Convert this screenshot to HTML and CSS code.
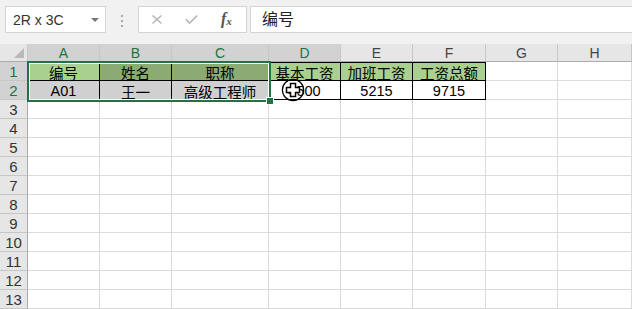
FILE: index.html
```html
<!DOCTYPE html>
<html lang="zh-CN">

<head>
  <meta charset="UTF-8">
  <meta name="viewport" content="width=device-width, initial-scale=1.0">
  <title>工资表</title>
  <link rel="stylesheet" href="styles.css">
</head>

<body>
  <div class="formula-bar">
    <div class="name-box">
      <span>2R x 3C</span>
      <span class="caret"></span>
    </div>
    <div class="grip"><i></i><i></i><i></i></div>
    <div class="fx-buttons">
      <svg class="icon" width="12" height="9" viewBox="0 0 12 9"><path d="M1.5 0.5 L10.5 8.5 M10.5 0.5 L1.5 8.5" stroke="#b4b4b4" stroke-width="1.4" fill="none"/></svg>
      <svg class="icon" width="13" height="9" viewBox="0 0 13 9"><path d="M0.8 4.2 L4.6 8 L12.2 0.6" stroke="#b4b4b4" stroke-width="1.6" fill="none"/></svg>
      <span class="fx">f<sub>x</sub></span>
    </div>
    <div class="formula-input">编号</div>
  </div>

  <div class="sheet">
    <div class="corner"></div>
    <div class="ch sel">A</div>
    <div class="ch sel">B</div>
    <div class="ch sel">C</div>
    <div class="ch sel">D</div>
    <div class="ch">E</div>
    <div class="ch">F</div>
    <div class="ch">G</div>
    <div class="ch">H</div>

    <div class="rh sel">1</div>
    <div class="c data top green">编号</div>
    <div class="c data top green-sel">姓名</div>
    <div class="c data top green-sel">职称</div>
    <div class="c data top green">基本工资</div>
    <div class="c data top green">加班工资</div>
    <div class="c data top green">工资总额</div>
    <div class="c"></div>
    <div class="c"></div>

    <div class="rh sel">2</div>
    <div class="c data gray-sel">A01</div>
    <div class="c data gray-sel">王一</div>
    <div class="c data gray-sel">高级工程师</div>
    <div class="c data">4500</div>
    <div class="c data">5215</div>
    <div class="c data">9715</div>
    <div class="c"></div>
    <div class="c"></div>

    <div class="rh">3</div><div class="c"></div><div class="c"></div><div class="c"></div><div class="c"></div><div class="c"></div><div class="c"></div><div class="c"></div><div class="c"></div>
    <div class="rh">4</div><div class="c"></div><div class="c"></div><div class="c"></div><div class="c"></div><div class="c"></div><div class="c"></div><div class="c"></div><div class="c"></div>
    <div class="rh">5</div><div class="c"></div><div class="c"></div><div class="c"></div><div class="c"></div><div class="c"></div><div class="c"></div><div class="c"></div><div class="c"></div>
    <div class="rh">6</div><div class="c"></div><div class="c"></div><div class="c"></div><div class="c"></div><div class="c"></div><div class="c"></div><div class="c"></div><div class="c"></div>
    <div class="rh">7</div><div class="c"></div><div class="c"></div><div class="c"></div><div class="c"></div><div class="c"></div><div class="c"></div><div class="c"></div><div class="c"></div>
    <div class="rh">8</div><div class="c"></div><div class="c"></div><div class="c"></div><div class="c"></div><div class="c"></div><div class="c"></div><div class="c"></div><div class="c"></div>
    <div class="rh">9</div><div class="c"></div><div class="c"></div><div class="c"></div><div class="c"></div><div class="c"></div><div class="c"></div><div class="c"></div><div class="c"></div>
    <div class="rh">10</div><div class="c"></div><div class="c"></div><div class="c"></div><div class="c"></div><div class="c"></div><div class="c"></div><div class="c"></div><div class="c"></div>
    <div class="rh">11</div><div class="c"></div><div class="c"></div><div class="c"></div><div class="c"></div><div class="c"></div><div class="c"></div><div class="c"></div><div class="c"></div>
    <div class="rh">12</div><div class="c"></div><div class="c"></div><div class="c"></div><div class="c"></div><div class="c"></div><div class="c"></div><div class="c"></div><div class="c"></div>
    <div class="rh">13</div><div class="c"></div><div class="c"></div><div class="c"></div><div class="c"></div><div class="c"></div><div class="c"></div><div class="c"></div><div class="c"></div>

    <!-- selection A1:C2 -->
    <div class="selection">
      <div class="handle"></div>
    </div>

    <!-- mouse cursor with click ring -->
    <svg class="cursor" width="24" height="24" viewBox="0 0 24 24">
      <circle cx="12" cy="12" r="10.6" fill="none" stroke="#000" stroke-width="1.2"/>
      <path d="M9.5 5.5 H14.5 V9.5 H18.5 V14.5 H14.5 V18.5 H9.5 V14.5 H5.5 V9.5 H9.5 Z" fill="#fff" stroke="#000" stroke-width="1.5"/>
    </svg>
  </div>
</body>

</html>
```

FILE: styles.css
```css
body {
  margin: 0;
  font-family: "Liberation Sans", "Noto Sans CJK SC", sans-serif;
  background-color: #f1f1f1;
  color: #000;
}

.formula-bar {
  display: flex;
  align-items: flex-start;
  height: 44px;
  padding: 6px 0 0 5px;
  box-sizing: border-box;
  background-color: #f1f1f1;
}

.name-box {
  display: flex;
  align-items: center;
  justify-content: space-between;
  width: 101px;
  height: 27px;
  padding: 0 6px 0 7px;
  box-sizing: border-box;
  background-color: #fff;
  border: 1px solid #d4d4d4;
  font-size: 14px;
  color: #333;
}

.caret {
  width: 0;
  height: 0;
  border-left: 4px solid transparent;
  border-right: 4px solid transparent;
  border-top: 4px solid #777;
}

.grip {
  display: flex;
  flex-direction: column;
  align-items: center;
  gap: 3px;
  width: 32px;
  padding-top: 9px;
}

.grip i {
  width: 2px;
  height: 2px;
  background-color: #a8a8a8;
}

.fx-buttons {
  display: flex;
  align-items: center;
  width: 109px;
  height: 27px;
  padding-left: 12px;
  box-sizing: border-box;
  background-color: #fff;
  border: 1px solid #d4d4d4;
}

.icon {
  margin-right: 22px;
}

.fx {
  margin-left: 1px;
  font-family: "Liberation Serif", serif;
  font-style: italic;
  font-weight: bold;
  font-size: 16px;
  line-height: 16px;
  color: #555;
}

.fx sub {
  font-size: 11px;
  vertical-align: -1px;
}

.formula-input {
  flex: 1;
  height: 27px;
  margin-left: 3px;
  padding-left: 11px;
  box-sizing: border-box;
  background-color: #fff;
  border: 1px solid #d4d4d4;
  border-right: none;
  font-size: 16px;
  line-height: 25px;
  color: #222;
}

.sheet {
  position: relative;
  display: grid;
  grid-template-columns: 28px 72px 72px 97px 72px 72px 73px 72px 74px;
  grid-template-rows: 18px repeat(13, 19px);
  background-color: #fff;
}

.sheet > div {
  box-sizing: border-box;
}

.corner {
  position: relative;
  background-color: #e6e6e6;
  border-right: 1px solid #c6c6c6;
  border-bottom: 1px solid #ababab;
}

.corner::after {
  content: "";
  position: absolute;
  right: 3px;
  bottom: 3px;
  border-left: 10px solid transparent;
  border-bottom: 10px solid #b9b9b9;
}

.ch {
  display: flex;
  align-items: center;
  justify-content: center;
  background-color: #e6e6e6;
  border-right: 1px solid #c6c6c6;
  border-bottom: 1px solid #ababab;
  font-size: 14px;
  color: #444;
}

.rh {
  display: flex;
  align-items: center;
  justify-content: center;
  background-color: #e6e6e6;
  border-right: 1px solid #ababab;
  border-bottom: 1px solid #c6c6c6;
  font-size: 15px;
  color: #333;
}

.ch.sel,
.rh.sel {
  background-color: #d2d2d2;
  color: #217346;
}

.c {
  display: flex;
  align-items: center;
  justify-content: center;
  padding-top: 2px;
  border-right: 1px solid #dadada;
  border-bottom: 1px solid #dadada;
  font-size: 14.5px;
  white-space: nowrap;
  overflow: visible;
}

.c.data {
  border-right-color: #000;
  border-bottom-color: #000;
}

.c.top {
  box-shadow: inset 0 1px 0 #000;
}

.green {
  background-color: #a9d08e;
}

.green-sel {
  background-color: #8bab73;
}

.gray-sel {
  background-color: #d0d0d0;
}

.selection {
  position: absolute;
  left: 27px;
  top: 17px;
  width: 244px;
  height: 41px;
  border: 2px solid #217346;
  box-sizing: border-box;
  box-shadow: inset 0 0 0 1px #fff;
}

.handle {
  position: absolute;
  right: -5px;
  bottom: -5px;
  width: 6px;
  height: 6px;
  background-color: #217346;
  border: 1px solid #fff;
}

.cursor {
  position: absolute;
  left: 281px;
  top: 34px;
}
```
